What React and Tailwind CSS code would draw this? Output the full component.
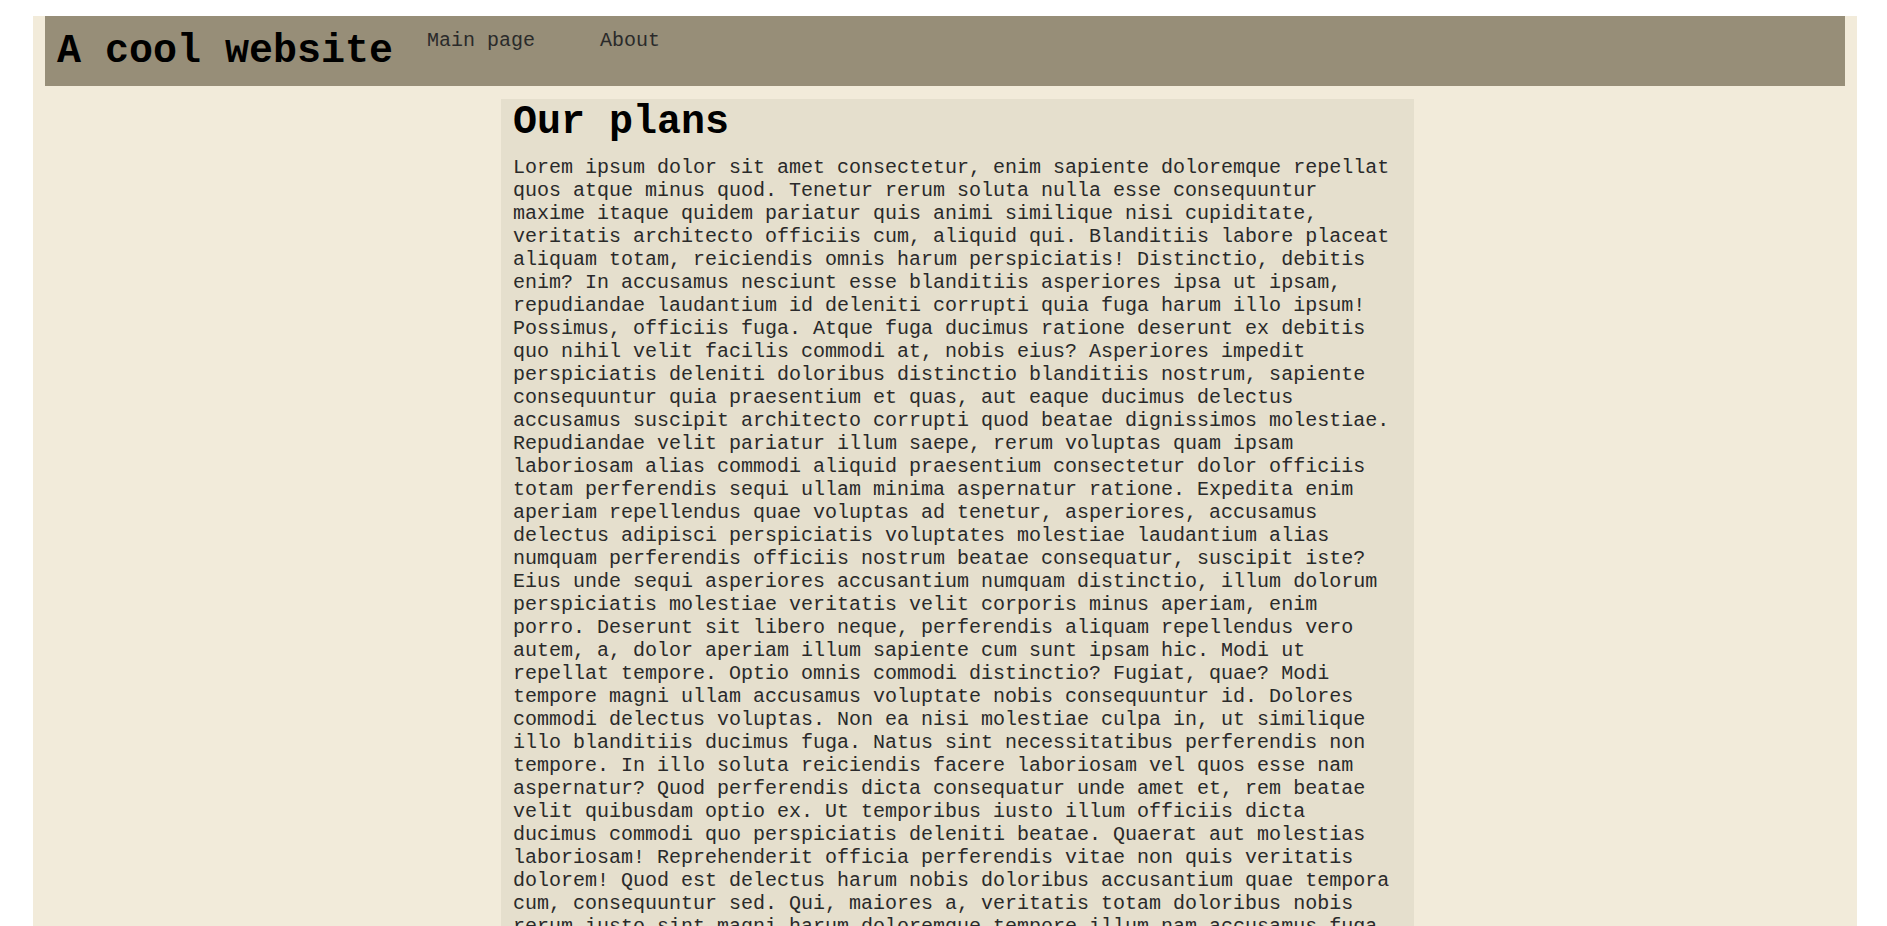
import React from "react";

const text =
  "Lorem ipsum dolor sit amet consectetur, enim sapiente doloremque repellat quos atque minus quod. Tenetur rerum soluta nulla esse consequuntur maxime itaque quidem pariatur quis animi similique nisi cupiditate, veritatis architecto officiis cum, aliquid qui. Blanditiis labore placeat aliquam totam, reiciendis omnis harum perspiciatis! Distinctio, debitis enim? In accusamus nesciunt esse blanditiis asperiores ipsa ut ipsam, repudiandae laudantium id deleniti corrupti quia fuga harum illo ipsum! Possimus, officiis fuga. Atque fuga ducimus ratione deserunt ex debitis quo nihil velit facilis commodi at, nobis eius? Asperiores impedit perspiciatis deleniti doloribus distinctio blanditiis nostrum, sapiente consequuntur quia praesentium et quas, aut eaque ducimus delectus accusamus suscipit architecto corrupti quod beatae dignissimos molestiae. Repudiandae velit pariatur illum saepe, rerum voluptas quam ipsam laboriosam alias commodi aliquid praesentium consectetur dolor officiis totam perferendis sequi ullam minima aspernatur ratione. Expedita enim aperiam repellendus quae voluptas ad tenetur, asperiores, accusamus delectus adipisci perspiciatis voluptates molestiae laudantium alias numquam perferendis officiis nostrum beatae consequatur, suscipit iste? Eius unde sequi asperiores accusantium numquam distinctio, illum dolorum perspiciatis molestiae veritatis velit corporis minus aperiam, enim porro. Deserunt sit libero neque, perferendis aliquam repellendus vero autem, a, dolor aperiam illum sapiente cum sunt ipsam hic. Modi ut repellat tempore. Optio omnis commodi distinctio? Fugiat, quae? Modi tempore magni ullam accusamus voluptate nobis consequuntur id. Dolores commodi delectus voluptas. Non ea nisi molestiae culpa in, ut similique illo blanditiis ducimus fuga. Natus sint necessitatibus perferendis non tempore. In illo soluta reiciendis facere laboriosam vel quos esse nam aspernatur? Quod perferendis dicta consequatur unde amet et, rem beatae velit quibusdam optio ex. Ut temporibus iusto illum officiis dicta ducimus commodi quo perspiciatis deleniti beatae. Quaerat aut molestias laboriosam! Reprehenderit officia perferendis vitae non quis veritatis dolorem! Quod est delectus harum nobis doloribus accusantium quae tempora cum, consequuntur sed. Qui, maiores a, veritatis totam doloribus nobis rerum iusto sint magni harum doloremque tempore illum nam accusamus fuga. Sed ipsa nostrum aliquid, quae veniam corporis nemo dolore, eos obcaecati voluptatum iure.";

const App = () => {
  return (
    <div className="bg-white font-['Liberation_Mono','Courier_New',monospace]">
      <div className="ml-[33px] mr-[30px] mt-[16px] bg-[#f2ebda] px-3 pb-6">
        {/* header */}
        <div className="flex items-start bg-[#978e78] px-3 pt-[13px] pb-3">
          <h1 className="text-[40px] leading-[normal] font-bold text-black">
            A cool website
          </h1>
          <nav className="flex items-start">
            <a className="ml-[34px] text-[20px] leading-[normal] text-[#2a2a2a]">
              Main page
            </a>
            <a className="ml-[65px] text-[20px] leading-[normal] text-[#2a2a2a]">
              About
            </a>
          </nav>
        </div>

        {/* main column */}
        <div className="grid grid-cols-[456px_913px_1fr] mt-[13px]">
          <div></div>
          <div className="bg-[#e5dfcd] pl-3 pr-[14px] pt-px pb-4">
            <h2 className="text-[40px] leading-[normal] font-bold text-black">
              Our plans
            </h2>
            <p className="mt-[11px] text-[20px] leading-[normal] text-[#2a2a2a]">
              {text}
            </p>
          </div>
          <div></div>
        </div>
      </div>
    </div>
  );
};

export default App;
